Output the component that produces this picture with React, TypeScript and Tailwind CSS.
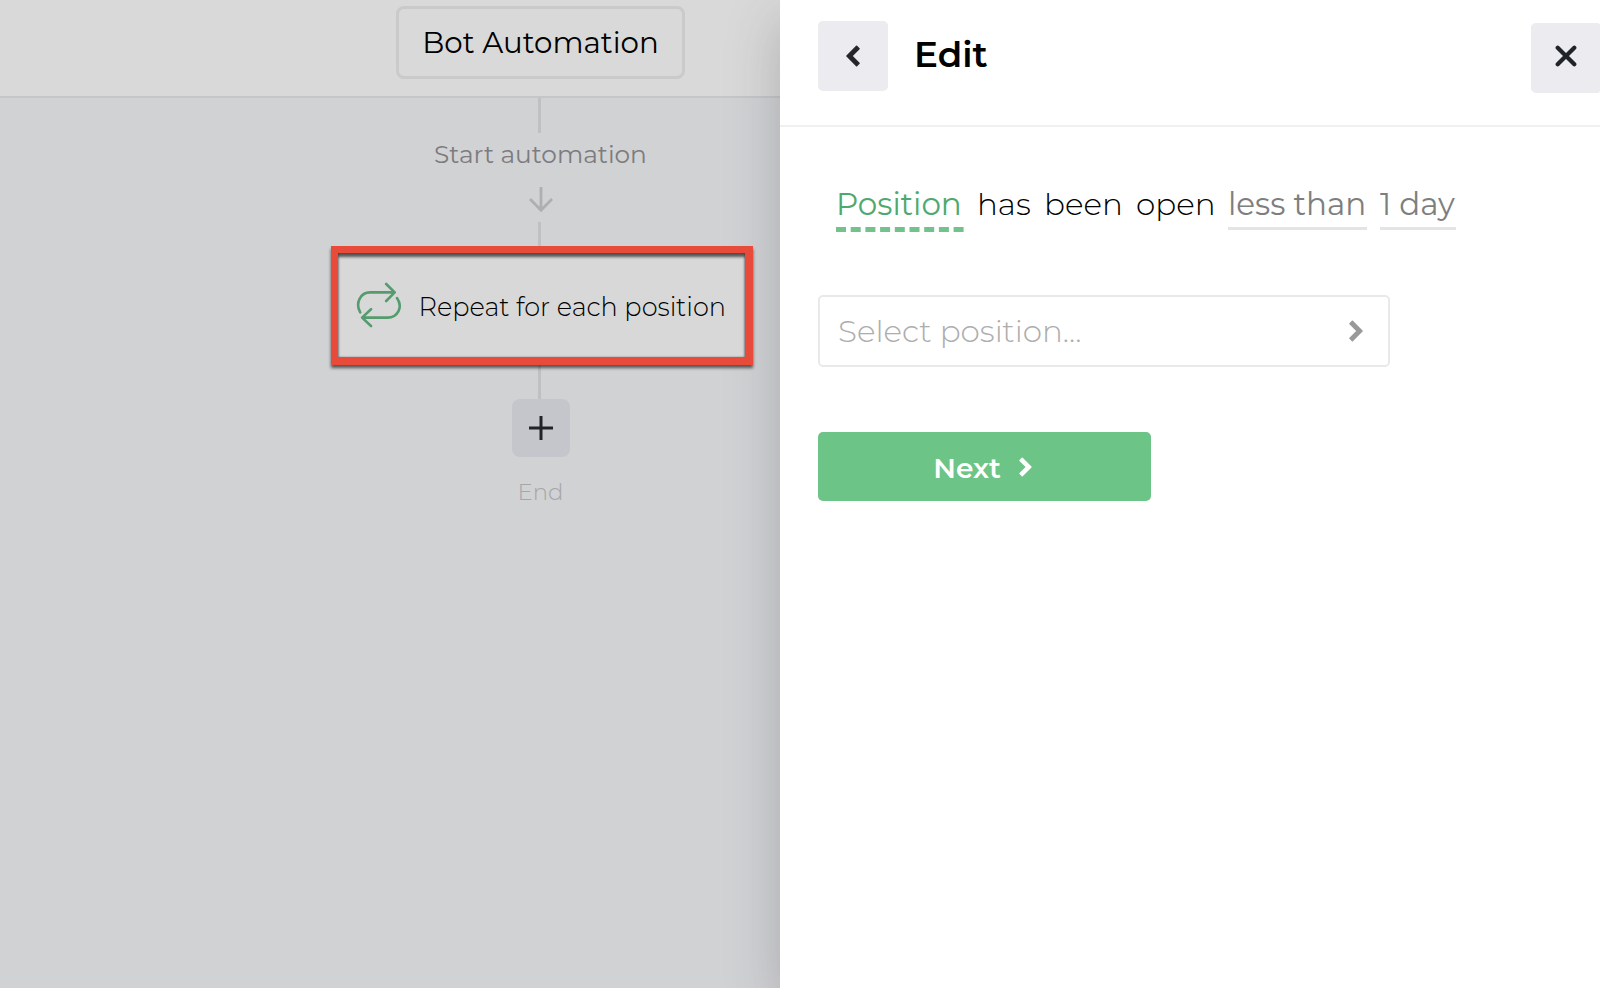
import React from "react";

type IconProps = { className?: string };

const Chevron = ({ className }: IconProps) => (
  <svg
    viewBox="0 0 14 22"
    fill="currentColor"
    stroke="currentColor"
    strokeWidth="1.6"
    strokeLinejoin="round"
    className={className}
  >
    <path d="M13 11L3.4 1.4 1 3.8 8.2 11 1 18.2l2.4 2.4z" />
  </svg>
);

const RepeatIcon = ({ className }: IconProps) => (
  <svg
    viewBox="0 0 46 46"
    fill="none"
    stroke="currentColor"
    strokeWidth="2.6"
    strokeLinecap="round"
    strokeLinejoin="round"
    className={className}
  >
    <path d="M4.2 30.3C-1 21 4.5 10.4 14 10.4H38.5M30.2 2l8.5 8.4-8.5 8.6" />
    <path d="M41 16c6.5 9.5.3 19.6-9.5 19.6H6.5M15 27.2l-8.9 8.4L15 44" />
  </svg>
);

const Connector = ({ className }: IconProps) => (
  <div className={`mr-[2px] w-[3px] bg-[#bfc0c2] ${className}`} />
);

const Flow = () => (
  <div className="h-full w-[780px] shrink-0 overflow-hidden bg-[#d1d2d4]">
    <div className="flex w-[1081px] flex-col items-center">
      <header className="flex h-[98px] w-full justify-center border-b-2 border-[#c6c6c8] bg-[#d9d9d9] pt-[6px]">
        <div className="flex h-[73px] w-[289px] items-center justify-center rounded-lg border-[3px] border-[#cacaca] text-[29.3px] leading-none whitespace-nowrap text-black">
          Bot Automation
        </div>
      </header>

      <Connector className="h-[35px]" />
      <div className="mt-[5px] mb-px flex h-[32px] items-center text-[24.8px] leading-none whitespace-nowrap text-[#7c7c7e]">
        Start automation
      </div>
      <svg
        viewBox="0 0 24 26"
        fill="none"
        stroke="#aeafb1"
        strokeWidth="2.8"
        className="mt-[16px] h-[26px] w-6"
      >
        <path d="M12 0v23M1 12l11 11.3L23 12" />
      </svg>
      <Connector className="mt-[9px] h-[24px]" />

      {/* highlighted step */}
      <div className="relative z-20 ml-[2px] flex h-[119px] w-[422px] items-center border-t-[7px] border-r-8 border-b-8 border-l-[7px] border-[#e94b3a] bg-[#d8d8d8] pl-[18px] shadow-[0_3px_3px_rgba(0,0,0,0.6),inset_0_4px_3px_rgba(0,0,0,0.6),inset_0_0_2px_rgba(0,0,0,0.4)]">
        <RepeatIcon className="size-[46px] text-[#549c6d]" />
        <span className="mt-[4px] ml-[17px] text-[25.6px] leading-none font-light whitespace-nowrap text-black">
          Repeat for each position
        </span>
      </div>

      <Connector className="h-[34px]" />
      <div className="flex size-[58px] items-center justify-center rounded-lg bg-[#c5c6cc]">
        <svg viewBox="0 0 24 24" stroke="#202328" strokeWidth="3" className="size-6">
          <path d="M12 0v24M0 12h24" />
        </svg>
      </div>
      <div className="mt-[19px] flex h-[32px] items-center text-[22.8px] leading-none font-light text-[#a6a6a8]">
        End
      </div>
    </div>
  </div>
);

const EditPanel = () => (
  <div className="relative z-10 h-full flex-1 bg-white shadow-[0_20px_50px_rgba(70,70,80,0.28)]">
    <header className="flex h-[127px] items-start border-b-2 border-[#f0f0f0] pl-[38px]">
      <button className="mt-[21px] flex size-[70px] items-center justify-center rounded-[5px] bg-[#ebebf0] text-[#25272b]">
        <Chevron className="h-[22px] w-[14px] rotate-180" />
      </button>
      <h1 className="mt-[37px] ml-[26px] flex h-[36px] items-center text-[35.7px] leading-none font-semibold text-black">
        Edit
      </h1>
      <button className="mt-[22.5px] ml-auto flex h-[70px] w-[69px] items-center justify-center rounded-l-[5px] rounded-r-[3px] bg-[#ebebf0] pb-[3px]">
        <svg viewBox="0 0 22 22" stroke="#202328" strokeWidth="4.2" strokeLinecap="round" className="size-[22px]">
          <path d="M2.7 2.7l16.6 16.6M19.3 2.7L2.7 19.3" />
        </svg>
      </button>
    </header>

    <div className="mt-[53px] flex h-[52px] pl-[56px] text-[31px] leading-[49px] whitespace-nowrap">
      <div className="w-[141px]">
        <div className="relative h-[52px] w-[128px] text-[#4fa96f]">
          Position
          <svg viewBox="0 0 128 5" className="absolute bottom-0 left-0 h-[5px] w-[128px]">
            <path d="M0 2.5h128" stroke="#73c18c" strokeWidth="5" strokeDasharray="10 4.7" />
          </svg>
        </div>
      </div>
      <span className="w-[67px] font-light">has</span>
      <span className="w-[92px] font-light">been</span>
      <span className="w-[92px] font-light">open</span>
      <div className="mr-[13px] h-[50px] w-[139px] border-b-[3px] border-[#e4e4e4] text-[#7e7e7e]">
        less than
      </div>
      <div className="h-[50px] w-[76px] border-b-[3px] border-[#e4e4e4] text-[#7e7e7e]">1 day</div>
    </div>

    <div className="mt-[63px] ml-[38px] flex h-[72px] w-[572px] items-center justify-between rounded-[5px] border-2 border-[#e9e9e9] pr-[25px] pl-[18px]">
      <span className="text-[31px] leading-none font-light text-[#adadad]">Select position...</span>
      <Chevron className="h-[22px] w-[14px] text-[#999]" />
    </div>

    <button className="mt-[65px] ml-[38px] flex h-[69px] w-[333px] items-center justify-center rounded-[5px] bg-[#6cc487] pr-[4px] text-white">
      <span className="mt-[2px] text-[28px] leading-none font-semibold">Next</span>
      <Chevron className="ml-[18px] h-5 w-[13px]" />
    </button>
  </div>
);

const App = () => {
  return (
    <div className="flex h-[988px] w-[1600px] overflow-hidden bg-white font-['Montserrat','Inter',sans-serif]">
      <Flow />
      <EditPanel />
    </div>
  );
};

export default App;
